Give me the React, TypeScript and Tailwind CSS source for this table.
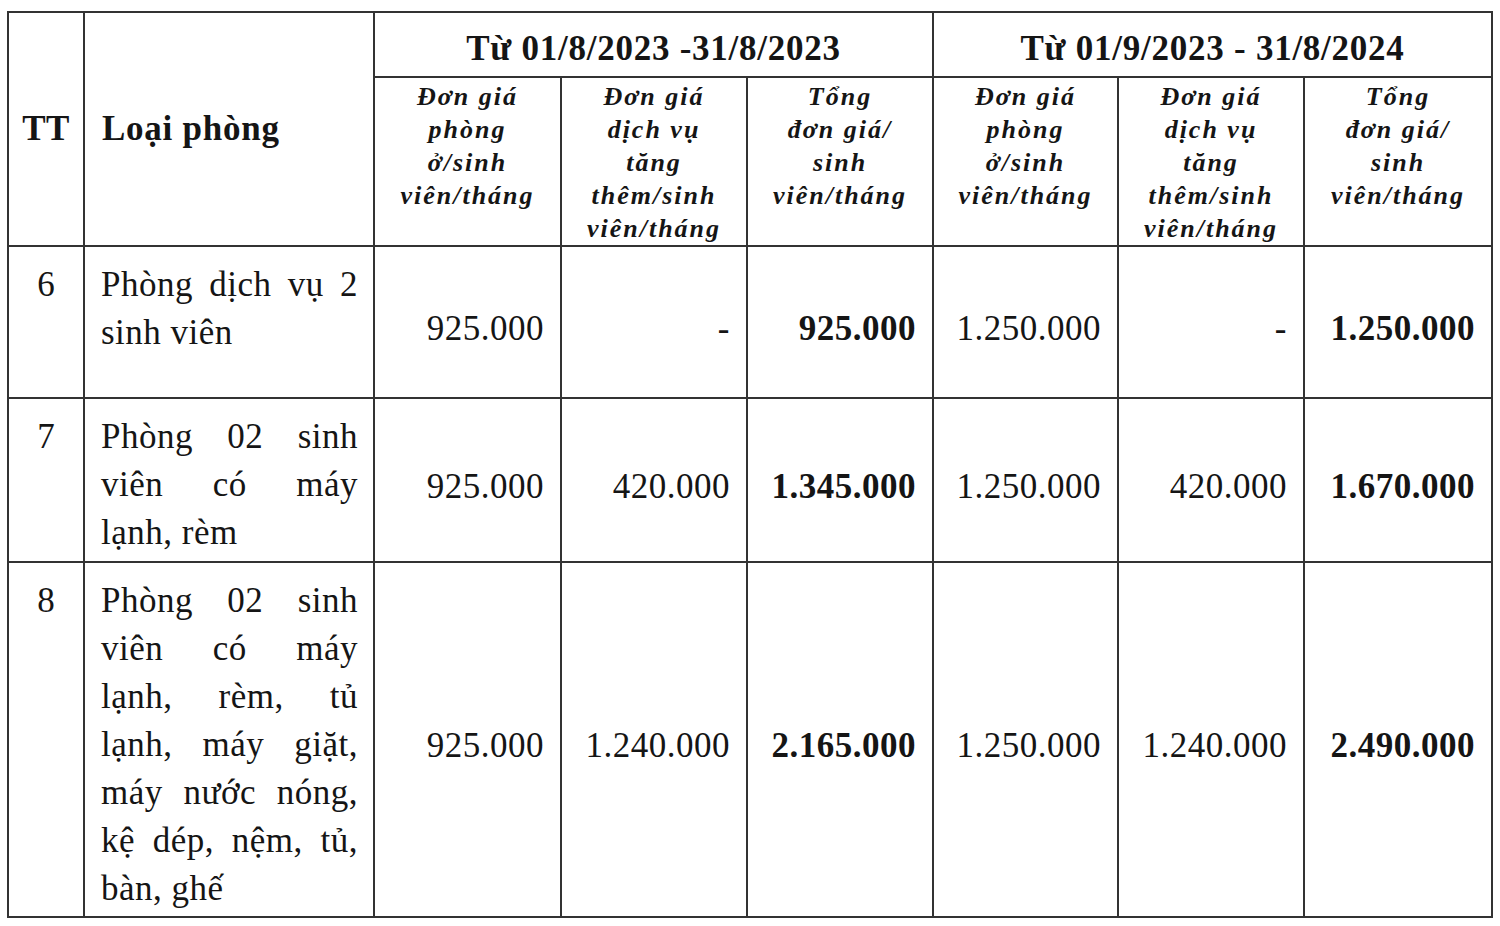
import React from "react";

const serif = "font-['Liberation_Serif','Times_New_Roman',serif]";

function Justified({ lines }: { lines: string[] }) {
  return (
    <div>
      {lines.map((l, i) =>
        i < lines.length - 1 ? (
          <div key={i} className="flex justify-between">
            {l.split(" ").map((w, j) => (
              <span key={j}>{w}</span>
            ))}
          </div>
        ) : (
          <div key={i}>{l}</div>
        )
      )}
    </div>
  );
}

function Sub({ lines }: { lines: string[] }) {
  return (
    <div className="font-bold italic text-[26px] leading-[33px] tracking-[2px] text-center">
      {lines.map((l, i) => (
        <div key={i}>{l}</div>
      ))}
    </div>
  );
}

const subHeads = [
  ["Đơn giá", "phòng", "ở/sinh", "viên/tháng"],
  ["Đơn giá", "dịch vụ", "tăng", "thêm/sinh", "viên/tháng"],
  ["Tổng", "đơn giá/", "sinh", "viên/tháng"],
];

type Row = {
  tt: string;
  lines: string[];
  h: string;
  vals: string[];
};

const rows: Row[] = [
  {
    tt: "6",
    lines: ["Phòng dịch vụ 2", "sinh viên"],
    h: "h-[152px]",
    vals: ["925.000", "-", "925.000", "1.250.000", "-", "1.250.000"],
  },
  {
    tt: "7",
    lines: ["Phòng 02 sinh", "viên có máy", "lạnh, rèm"],
    h: "h-[164px]",
    vals: ["925.000", "420.000", "1.345.000", "1.250.000", "420.000", "1.670.000"],
  },
  {
    tt: "8",
    lines: [
      "Phòng 02 sinh",
      "viên có máy",
      "lạnh, rèm, tủ",
      "lạnh, máy giặt,",
      "máy nước nóng,",
      "kệ dép, nệm, tủ,",
      "bàn, ghế",
    ],
    h: "h-[355px]",
    vals: ["925.000", "1.240.000", "2.165.000", "1.250.000", "1.240.000", "2.490.000"],
  },
];

const cell = "border-2 border-[#333333] p-0";

export default function App() {
  return (
    <div className={`w-[1500px] h-[926px] bg-white text-[#151515] ${serif} pt-[11px] pl-[7px]`}>
      <table className="table-fixed border-collapse w-[1484px]">
        <colgroup>
          <col className="w-[76px]" />
          <col className="w-[290px]" />
          <col className="w-[187px]" />
          <col className="w-[186px]" />
          <col className="w-[186px]" />
          <col className="w-[185px]" />
          <col className="w-[186px]" />
          <col className="w-[188px]" />
        </colgroup>
        <tbody>
          <tr className="h-[65px]">
            <td rowSpan={2} className={`${cell} text-center align-middle font-bold text-[35px] tracking-[0.5px]`}>
              TT
            </td>
            <td rowSpan={2} className={`${cell} align-middle font-bold text-[35px] tracking-[0.75px] pl-[17px]`}>
              Loại phòng
            </td>
            <td colSpan={3} className={`${cell} text-center align-middle font-bold text-[35px] tracking-[0.75px] pt-[10px]`}>
              Từ 01/8/2023 -31/8/2023
            </td>
            <td colSpan={3} className={`${cell} text-center align-middle font-bold text-[35px] tracking-[0.75px] pt-[10px]`}>
              Từ 01/9/2023 - 31/8/2024
            </td>
          </tr>
          <tr className="h-[168px]">
            {[0, 1].map((g) =>
              subHeads.map((s, i) => (
                <td key={`${g}-${i}`} className={`${cell} align-top pt-[2px]`}>
                  <Sub lines={s} />
                </td>
              ))
            )}
          </tr>
          {rows.map((r) => (
            <tr key={r.tt} className={r.h}>
              <td className={`${cell} align-top text-center text-[35px] leading-[48px] pt-[14px]`}>{r.tt}</td>
              <td className={`${cell} align-top text-[35px] leading-[48px] tracking-[0.5px] pt-[14px] pl-[16px] pr-[15px]`}>
                <Justified lines={r.lines} />
              </td>
              {r.vals.map((v, i) => (
                <td
                  key={i}
                  className={`${cell} align-middle text-right text-[35px] leading-[48px] tracking-[0.5px] pt-[13px] pr-[16px] ${
                    i % 3 === 2 ? "font-bold" : ""
                  }`}
                >
                  {v}
                </td>
              ))}
            </tr>
          ))}
        </tbody>
      </table>
    </div>
  );
}
